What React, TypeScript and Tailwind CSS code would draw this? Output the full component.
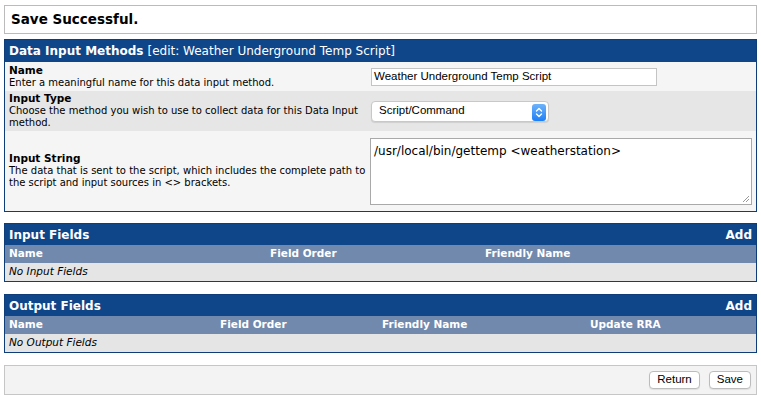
import React from "react";

const font = { fontFamily: '"DejaVu Sans", Verdana, sans-serif' };

function SelectArrows() {
  return (
    <span className="absolute right-[2px] top-[2px] flex h-[17px] w-[14px] items-center justify-center rounded-[3px] bg-gradient-to-b from-[#6cb3fa] to-[#1a7ef5]">
      <svg width="8" height="11" viewBox="0 0 8 11" fill="none" stroke="white" strokeWidth="1.4" strokeLinecap="round" strokeLinejoin="round">
        <path d="M1.5 4 L4 1.5 L6.5 4" />
        <path d="M1.5 7 L4 9.5 L6.5 7" />
      </svg>
    </span>
  );
}

function SectionTable({ title, cols, empty }: { title: string; cols: { label: string; w: string }[]; empty: string }) {
  return (
    <div className="mx-[4px] border border-[#0f3d7a]">
      <div className="flex h-[21px] items-center justify-between bg-[#0f468a] px-[4px] text-[12px] font-bold text-white">
        <span>{title}</span>
        <span>Add</span>
      </div>
      <div className="flex h-[18px] items-center bg-[#7089ad] px-[4px] text-[10.5px] font-bold text-white">
        {cols.map((c) => (
          <span key={c.label} className={c.w}>
            {c.label}
          </span>
        ))}
      </div>
      <div className="flex h-[18px] items-center bg-[#e5e5e5] px-[4px] text-[10.5px] italic text-black">{empty}</div>
    </div>
  );
}

export default function App() {
  return (
    <div className="min-h-[397px] w-[761px] bg-white pt-[5px] text-black" style={font}>
      <div className="mx-[4px] flex h-[29px] items-center border border-[#bbbbbb] px-[6px] text-[13.5px] font-bold">
        Save Successful.
      </div>

      <div className="mx-[4px] mt-[5px] border border-[#0f3d7a]">
        <div className="flex h-[22px] items-center bg-[#0f468a] px-[4px] text-[12px] text-white">
          <span className="font-bold">Data Input Methods</span>
          <span className="ml-[4px]">[edit: Weather Underground Temp Script]</span>
        </div>

        <div className="flex h-[29px] items-center bg-[#f5f5f5] px-[4px]">
          <div className="w-[362px] text-[10px] leading-[12.5px]">
            <div className="text-[10.5px] font-bold">Name</div>
            <div>Enter a meaningful name for this data input method.</div>
          </div>
          <div className="flex h-[18px] w-[286px] items-center border border-[#c4c4c4] bg-white px-[2px] text-[11.5px]" style={{ fontFamily: '"Liberation Sans", Arial, sans-serif' }}>
            Weather Underground Temp Script
          </div>
        </div>

        <div className="flex h-[40px] items-center bg-[#e6e6e6] px-[4px]">
          <div className="w-[362px] pr-[2px] text-[10px] leading-[12.5px]">
            <div className="text-[10.5px] font-bold">Input Type</div>
            <div>Choose the method you wish to use to collect data for this Data Input method.</div>
          </div>
          <div
            className="relative flex h-[21px] w-[178px] items-center rounded-[4px] border border-[#c8c8c8] bg-white px-[7px] text-[11.5px] shadow-[0_1px_1px_rgba(0,0,0,0.1)]"
            style={{ fontFamily: '"Liberation Sans", Arial, sans-serif' }}
          >
            Script/Command
            <SelectArrows />
          </div>
        </div>

        <div className="flex h-[80px] items-center bg-[#f5f5f5] px-[4px]">
          <div className="w-[362px] text-[10px] leading-[12.5px]">
            <div className="text-[10.5px] font-bold">Input String</div>
            <div>The data that is sent to the script, which includes the complete path to the script and input sources in &lt;&gt; brackets.</div>
          </div>
          <div className="relative h-[67px] w-[383px] border border-[#a9a9a9] bg-white px-[3px] pt-[3px] text-[12px]">
            /usr/local/bin/gettemp &lt;weatherstation&gt;
            <svg className="absolute bottom-[1px] right-[1px]" width="8" height="8" viewBox="0 0 8 8" stroke="#999" strokeWidth="1">
              <path d="M7 1 L1 7 M7 4 L4 7" />
            </svg>
          </div>
        </div>
      </div>

      <div className="mt-[11px]">
        <SectionTable
          title="Input Fields"
          cols={[
            { label: "Name", w: "w-[261px]" },
            { label: "Field Order", w: "w-[215px]" },
            { label: "Friendly Name", w: "" },
          ]}
          empty="No Input Fields"
        />
      </div>

      <div className="mt-[12px]">
        <SectionTable
          title="Output Fields"
          cols={[
            { label: "Name", w: "w-[211px]" },
            { label: "Field Order", w: "w-[162px]" },
            { label: "Friendly Name", w: "w-[208px]" },
            { label: "Update RRA", w: "" },
          ]}
          empty="No Output Fields"
        />
      </div>

      <div className="mx-[4px] mt-[12px] flex h-[30px] items-center justify-end gap-[9px] border border-[#c6c6c6] bg-[#f3f3f3] pr-[5px]" style={{ fontFamily: '"Liberation Sans", Arial, sans-serif' }}>
        <button className="flex h-[18px] items-center rounded-[4px] border border-[#bcbcbc] bg-white px-[7px] text-[11.5px] shadow-[0_1px_1px_rgba(0,0,0,0.08)]">
          Return
        </button>
        <button className="flex h-[18px] items-center rounded-[4px] border border-[#bcbcbc] bg-white px-[7px] text-[11.5px] shadow-[0_1px_1px_rgba(0,0,0,0.08)]">
          Save
        </button>
      </div>
    </div>
  );
}
